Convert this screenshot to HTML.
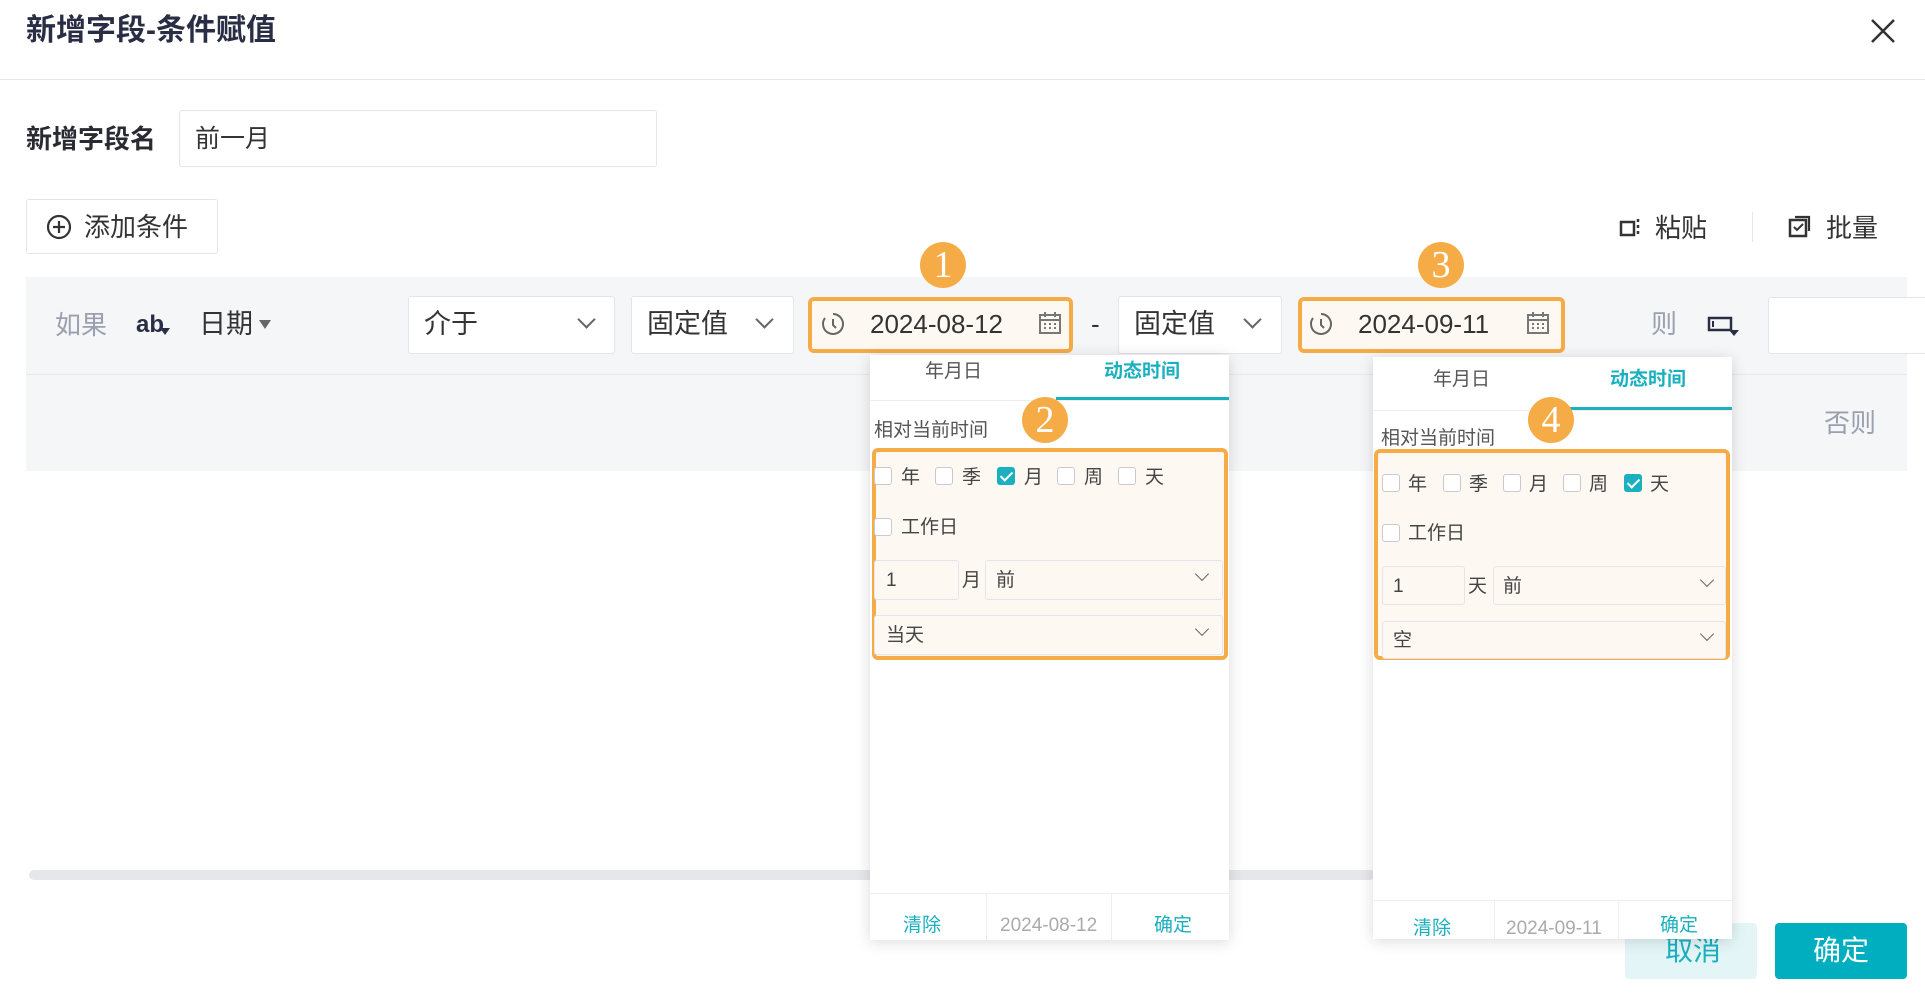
<!DOCTYPE html>
<html><head><meta charset="utf-8"><style>
*{box-sizing:border-box;margin:0;padding:0}
body{width:1925px;height:1000px;position:relative;background:#fff;font-family:"Liberation Sans","Noto Sans CJK SC",sans-serif;color:#333;overflow:hidden}
.a{position:absolute}
.box{position:absolute;border:1px solid #e3e5ea;background:#fff;border-radius:3px}
.t{position:absolute;white-space:nowrap;line-height:1}
.chev{position:absolute;width:13px;height:13px;border-right:2px solid #666;border-bottom:2px solid #666;transform:rotate(45deg)}
.chs{position:absolute;width:10px;height:10px;border-right:1.5px solid #666;border-bottom:1.5px solid #666;transform:rotate(45deg)}
.badge{position:absolute;width:46px;height:46px;border-radius:50%;background:#f5ac47;color:#fff;font-family:"Liberation Serif",serif;font-size:38px;line-height:46px;text-align:center}
.pop{position:absolute;background:#fff;box-shadow:0 2px 14px rgba(0,0,0,.15)}
.cb{position:absolute;width:18px;height:18px;border:1px solid #c8cad0;border-radius:3px;background:#fff}
.cb.on{background:#1ab0bf;border-color:#1ab0bf}
.cb.on:after{content:"";position:absolute;left:5px;top:1px;width:5px;height:10px;border-right:2px solid #fff;border-bottom:2px solid #fff;transform:rotate(45deg)}
.lb{font-size:19px;color:#444}
</style></head><body>
<div class="t" style="left:26px;top:16px;font-size:30px;font-weight:bold;color:#2a2e45">新增字段-条件赋值</div>
<svg class="a" style="left:1870px;top:18px" width="26" height="26"><path d="M2 2L24 24M24 2L2 24" stroke="#333" stroke-width="2.5"/></svg>
<div class="a" style="left:0;top:79px;width:1925px;height:1px;background:#e5e6ea"></div>

<div class="t" style="left:26px;top:126px;font-size:26px;font-weight:bold;color:#2a2a33">新增字段名</div>
<div class="box" style="left:179px;top:110px;width:478px;height:57px"></div>
<div class="t" style="left:195px;top:127px;font-size:25px;color:#333">前一月</div>

<div class="box" style="left:26px;top:199px;width:192px;height:55px"></div>
<svg class="a" style="left:46px;top:214px" width="26" height="26"><circle cx="13" cy="13" r="11" fill="none" stroke="#333" stroke-width="2.2"/><path d="M13 7v12M7 13h12" stroke="#333" stroke-width="2.2"/></svg>
<div class="t" style="left:84px;top:214px;font-size:26px;color:#333">添加条件</div>

<svg class="a" style="left:1619px;top:216px" width="24" height="22"><rect x="2" y="6" width="13" height="13" fill="none" stroke="#333" stroke-width="2.5"/><path d="M19 3v3M19 9v3M19 15v3" stroke="#333" stroke-width="2.5"/></svg>
<div class="t" style="left:1655px;top:215px;font-size:26px;color:#333">粘贴</div>
<div class="a" style="left:1752px;top:212px;width:1px;height:30px;background:#e5e6ea"></div>
<svg class="a" style="left:1788px;top:214px" width="26" height="26"><rect x="2" y="6" width="16" height="16" fill="none" stroke="#333" stroke-width="2.5"/><path d="M7 3h14v14" fill="none" stroke="#333" stroke-width="2.2"/><path d="M6 13l3 3 6-6" fill="none" stroke="#333" stroke-width="2"/></svg>
<div class="t" style="left:1826px;top:215px;font-size:26px;color:#333">批量</div>

<div class="a" style="left:26px;top:277px;width:1881px;height:194px;background:#f5f6f8"></div>
<div class="a" style="left:26px;top:374px;width:1881px;height:1px;background:#e6e8ec"></div>
<div class="t" style="left:55px;top:312px;font-size:26px;color:#9aa0b0">如果</div>
<div class="t" style="left:136px;top:313px;font-size:24px;color:#2a2e45;font-weight:bold">ab</div>
<svg class="a" style="left:160px;top:328px" width="10" height="8"><path d="M0 0h10L5 7z" fill="#2a2e45"/></svg>
<div class="t" style="left:199px;top:311px;font-size:27px;color:#333">日期</div>
<svg class="a" style="left:259px;top:320px" width="12" height="10"><path d="M0 0h12L6 9z" fill="#666"/></svg>

<div class="box" style="left:408px;top:296px;width:207px;height:58px"></div>
<div class="t" style="left:424px;top:311px;font-size:27px;color:#333">介于</div>
<div class="chev" style="left:580px;top:313px"></div>
<div class="box" style="left:631px;top:296px;width:163px;height:58px"></div>
<div class="t" style="left:647px;top:311px;font-size:27px;color:#333">固定值</div>
<div class="chev" style="left:758px;top:313px"></div>

<div class="box" style="left:808px;top:297px;width:265px;height:56px;background:#fdf8f2;border:4px solid #f5ac47;border-radius:6px"></div>
<svg class="a" style="left:820px;top:311px" width="26" height="26"><path d="M13 3a10 10 0 1 1-8 4" fill="none" stroke="#666" stroke-width="2"/><path d="M13 8v6l3 3" fill="none" stroke="#666" stroke-width="2"/></svg>
<div class="t" style="left:870px;top:311px;font-size:26px;color:#333">2024-08-12</div>
<svg class="a" style="left:1038px;top:311px" width="24" height="24"><rect x="2" y="4" width="20" height="18" fill="none" stroke="#777" stroke-width="2"/><path d="M2 9h20M7 1v5M17 1v5" stroke="#777" stroke-width="2"/><path d="M6 13h2M11 13h2M16 13h2M6 17h2M11 17h2M16 17h2" stroke="#777" stroke-width="2"/></svg>
<div class="t" style="left:1091px;top:311px;font-size:26px;color:#333">-</div>
<div class="box" style="left:1118px;top:296px;width:164px;height:58px"></div>
<div class="t" style="left:1134px;top:311px;font-size:27px;color:#333">固定值</div>
<div class="chev" style="left:1246px;top:313px"></div>
<div class="box" style="left:1298px;top:297px;width:267px;height:56px;background:#fdf8f2;border:4px solid #f5ac47;border-radius:6px"></div>
<svg class="a" style="left:1308px;top:311px" width="26" height="26"><path d="M13 3a10 10 0 1 1-8 4" fill="none" stroke="#666" stroke-width="2"/><path d="M13 8v6l3 3" fill="none" stroke="#666" stroke-width="2"/></svg>
<div class="t" style="left:1358px;top:311px;font-size:26px;color:#333">2024-09-11</div>
<svg class="a" style="left:1526px;top:311px" width="24" height="24"><rect x="2" y="4" width="20" height="18" fill="none" stroke="#777" stroke-width="2"/><path d="M2 9h20M7 1v5M17 1v5" stroke="#777" stroke-width="2"/><path d="M6 13h2M11 13h2M16 13h2M6 17h2M11 17h2M16 17h2" stroke="#777" stroke-width="2"/></svg>

<div class="t" style="left:1651px;top:311px;font-size:26px;color:#9aa0b0">则</div>
<svg class="a" style="left:1707px;top:316px" width="34" height="22"><rect x="2" y="2" width="22" height="12" fill="none" stroke="#2a2e45" stroke-width="2.5"/><path d="M6 5v6" stroke="#2a2e45" stroke-width="2"/><path d="M22 14h10l-5 6z" fill="#2a2e45"/></svg>
<div class="box" style="left:1768px;top:297px;width:160px;height:57px;border-radius:3px 0 0 3px"></div>
<div class="t" style="left:1824px;top:410px;font-size:26px;color:#9aa0b0">否则</div>

<div class="a" style="left:29px;top:870px;width:1346px;height:10px;background:#e6e7ea;border-radius:5px"></div>

<div class="a" style="left:1625px;top:923px;width:132px;height:56px;background:#e3f5f7;border-radius:4px"></div>
<div class="t" style="left:1665px;top:937px;font-size:28px;color:#1ab0bf">取消</div>
<div class="a" style="left:1775px;top:923px;width:132px;height:56px;background:#00afbf;border-radius:4px"></div>
<div class="t" style="left:1813px;top:937px;font-size:28px;color:#fff">确定</div>

<!-- popup 1 -->
<div class="pop" style="left:870px;top:355px;width:359px;height:585px">
 <div class="t" style="left:55px;top:7px;font-size:19px;color:#555">年月日</div>
 <div class="t" style="left:234px;top:7px;font-size:19px;color:#1ab0bf;font-weight:bold">动态时间</div>
 <div class="a" style="left:0;top:45px;width:359px;height:1px;background:#eee"></div>
 <div class="a" style="left:186px;top:42px;width:173px;height:3px;background:#1ab0bf"></div>
 <div class="t lb" style="left:4px;top:66px;color:#555">相对当前时间</div>
 <div class="a" style="left:0;top:538px;width:359px;height:1px;background:#eee"></div>
 <div class="a" style="left:116px;top:538px;width:1px;height:47px;background:#eee"></div>
 <div class="a" style="left:241px;top:538px;width:1px;height:47px;background:#eee"></div>
 <div class="t" style="left:33px;top:561px;font-size:19px;color:#1ab0bf">清除</div>
 <div class="t" style="left:130px;top:561px;font-size:19px;color:#aaa">2024-08-12</div>
 <div class="t" style="left:284px;top:561px;font-size:19px;color:#1ab0bf">确定</div>
</div>
<div class="a" style="left:872px;top:448px;width:356px;height:212px;background:#fdf8f2;border:4px solid #f5ac47;border-radius:6px"></div>
<div class="cb" style="left:874px;top:467px"></div><div class="t lb" style="left:901px;top:468px">年</div>
<div class="cb" style="left:935px;top:467px"></div><div class="t lb" style="left:962px;top:468px">季</div>
<div class="cb on" style="left:997px;top:467px"></div><div class="t lb" style="left:1024px;top:468px">月</div>
<div class="cb" style="left:1057px;top:467px"></div><div class="t lb" style="left:1084px;top:468px">周</div>
<div class="cb" style="left:1118px;top:467px"></div><div class="t lb" style="left:1145px;top:468px">天</div>
<div class="cb" style="left:874px;top:518px"></div><div class="t lb" style="left:901px;top:518px">工作日</div>
<div class="box" style="left:874px;top:560px;width:85px;height:40px;background:#fdf8f2"></div>
<div class="t lb" style="left:886px;top:571px">1</div>
<div class="t lb" style="left:962px;top:571px">月</div>
<div class="box" style="left:985px;top:560px;width:238px;height:40px;background:#fdf8f2"></div>
<div class="t lb" style="left:996px;top:571px">前</div>
<div class="chs" style="left:1197px;top:569px"></div>
<div class="box" style="left:874px;top:615px;width:349px;height:40px;background:#fdf8f2"></div>
<div class="t lb" style="left:886px;top:626px">当天</div>
<div class="chs" style="left:1197px;top:624px"></div>

<!-- popup 2 -->
<div class="pop" style="left:1373px;top:357px;width:359px;height:582px">
 <div class="t" style="left:60px;top:13px;font-size:19px;color:#555">年月日</div>
 <div class="t" style="left:237px;top:13px;font-size:19px;color:#1ab0bf;font-weight:bold">动态时间</div>
 <div class="a" style="left:0;top:53px;width:359px;height:1px;background:#eee"></div>
 <div class="a" style="left:190px;top:50px;width:169px;height:3px;background:#1ab0bf"></div>
 <div class="t lb" style="left:8px;top:72px;color:#555">相对当前时间</div>
 <div class="a" style="left:0;top:543px;width:359px;height:1px;background:#eee"></div>
 <div class="a" style="left:121px;top:543px;width:1px;height:39px;background:#eee"></div>
 <div class="a" style="left:245px;top:543px;width:1px;height:39px;background:#eee"></div>
 <div class="t" style="left:40px;top:562px;font-size:19px;color:#1ab0bf">清除</div>
 <div class="t" style="left:133px;top:562px;font-size:19px;color:#aaa">2024-09-11</div>
 <div class="t" style="left:287px;top:559px;font-size:19px;color:#1ab0bf">确定</div>
</div>
<div class="a" style="left:1374px;top:449px;width:356px;height:211px;background:#fdf8f2;border:4px solid #f5ac47;border-radius:6px"></div>
<div class="cb" style="left:1382px;top:474px"></div><div class="t lb" style="left:1408px;top:475px">年</div>
<div class="cb" style="left:1443px;top:474px"></div><div class="t lb" style="left:1469px;top:475px">季</div>
<div class="cb" style="left:1503px;top:474px"></div><div class="t lb" style="left:1529px;top:475px">月</div>
<div class="cb" style="left:1563px;top:474px"></div><div class="t lb" style="left:1589px;top:475px">周</div>
<div class="cb on" style="left:1624px;top:474px"></div><div class="t lb" style="left:1650px;top:475px">天</div>
<div class="cb" style="left:1382px;top:524px"></div><div class="t lb" style="left:1408px;top:524px">工作日</div>
<div class="box" style="left:1382px;top:566px;width:83px;height:39px;background:#fdf8f2"></div>
<div class="t lb" style="left:1393px;top:577px">1</div>
<div class="t lb" style="left:1468px;top:577px">天</div>
<div class="box" style="left:1493px;top:566px;width:233px;height:39px;background:#fdf8f2"></div>
<div class="t lb" style="left:1503px;top:577px">前</div>
<div class="chs" style="left:1702px;top:575px"></div>
<div class="box" style="left:1382px;top:621px;width:344px;height:38px;background:#fdf8f2"></div>
<div class="t lb" style="left:1393px;top:631px">空</div>
<div class="chs" style="left:1702px;top:629px"></div>

<div class="badge" style="left:920px;top:242px">1</div>
<div class="badge" style="left:1022px;top:397px">2</div>
<div class="badge" style="left:1418px;top:242px">3</div>
<div class="badge" style="left:1528px;top:397px">4</div>
</body></html>
